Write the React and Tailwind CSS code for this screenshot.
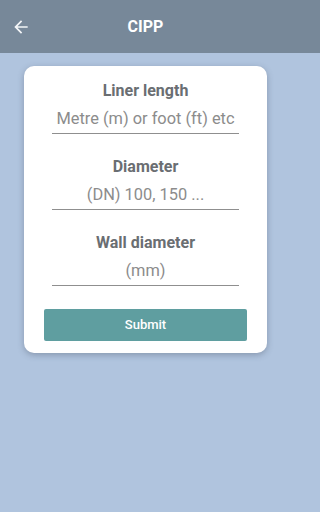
import { useState } from 'react'

function BackArrow() {
  return (
    <svg viewBox="0 0 24 24" width="20" height="20" fill="#f4f6f8">
      <path d="M20 11H7.83l5.59-5.59L12 4l-8 8 8 8 1.41-1.41L7.83 13H20v-2z" />
    </svg>
  )
}

function Field({ label, placeholder, first }) {
  const [value, setValue] = useState('')
  return (
    <div className={first ? '' : 'mt-[22px]'}>
      <div className="h-[20px] leading-[22px] text-center text-[16px] font-bold text-[#6a6e72]">
        {label}
      </div>
      <div className="mx-[28px] h-[34px] border-b border-[#8f8f8f] flex items-center">
        <input
          autoFocus={first}
          value={value}
          onChange={(e) => setValue(e.target.value)}
          placeholder={placeholder}
          className="w-full bg-transparent text-center text-[16.4px] pt-[6px] text-[#555] caret-[#2a8a7e] placeholder:text-[#8c8c8c] outline-none"
        />
      </div>
    </div>
  )
}

export default function App() {
  return (
    <div
      className="min-h-screen bg-[#b0c4de]"
      style={{ fontFamily: 'Roboto, "Liberation Sans", sans-serif' }}
    >
      <header className="h-[53px] bg-[#778899]">
        <div className="w-[291px] h-full flex items-center px-[11px] relative">
          <BackArrow />
          <h1 className="absolute inset-x-0 text-center text-[16px] font-bold text-white pointer-events-none">
            CIPP
          </h1>
        </div>
      </header>

      <div className="w-[291px] pt-[13px]">
        <main className="mx-[24px] bg-white rounded-[10px] shadow-[0_2px_6px_rgba(60,70,90,0.35)] pt-[14px] pb-[12px]">
          <Field first label="Liner length" placeholder="Metre (m) or foot (ft) etc" />
          <Field label="Diameter" placeholder="(DN) 100, 150 ..." />
          <Field label="Wall diameter" placeholder="(mm)" />
          <div className="px-[20px] mt-[23px]">
            <button className="w-full h-[32px] rounded-[2px] bg-[#5f9ea0] text-white text-[13px] font-medium">
              Submit
            </button>
          </div>
        </main>
      </div>
    </div>
  )
}
